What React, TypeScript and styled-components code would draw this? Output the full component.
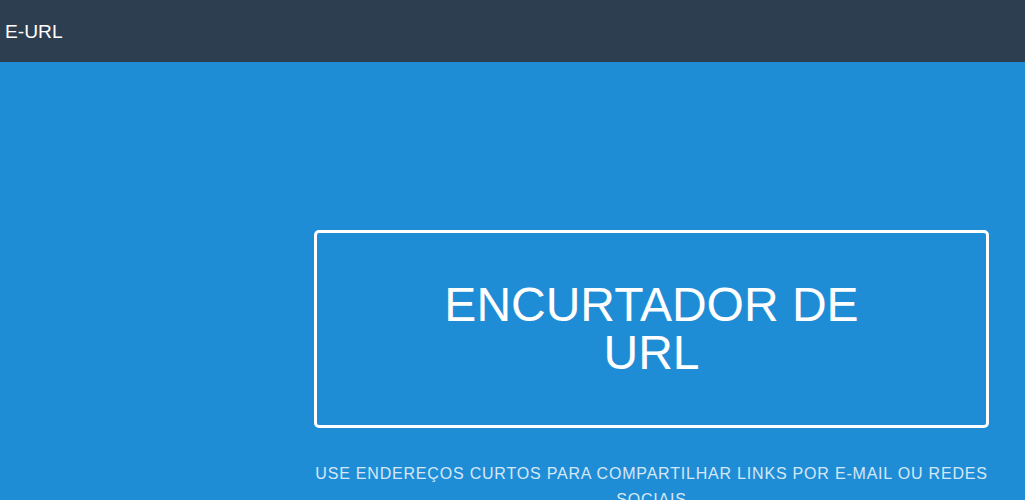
import React from "react";
import styled, { createGlobalStyle } from "styled-components";

const Global = createGlobalStyle`
  html, body { margin: 0; padding: 0; }
  body {
    font-family: "Liberation Sans", Arial, sans-serif;
    background: #1f8dd6;
    overflow: hidden;
  }
`;

const Page = styled.div`
  min-height: 500px;
  display: flex;
  flex-direction: column;
`;

const Header = styled.header`
  height: 62px;
  background: #2d3e50;
  display: flex;
  align-items: center;
  padding: 0 5px;
  box-sizing: border-box;
`;

const Brand = styled.a`
  color: #ffffff;
  font-size: 19.2px;
  font-weight: 400;
  text-decoration: none;
  margin-top: 1px;
`;

const Splash = styled.main`
  flex: 1;
  background: #1f8dd6;
  padding: 168px 0 0 314px;
`;

const SplashInner = styled.div`
  width: 675px;
  text-align: center;
  text-transform: uppercase;
`;

const Head = styled.h1`
  margin: 0;
  border: 3px solid #ffffff;
  border-radius: 5px;
  padding: 48px 76.8px;
  font-size: 48px;
  line-height: 48px;
  font-weight: 400;
  color: #ffffff;
`;

const Subhead = styled.p`
  margin: 33px -1px 0;
  color: #ffffff;
  opacity: 0.8;
  font-size: 16px;
  line-height: 26px;
  letter-spacing: 0.05em;
`;

export default function App() {
  return (
    <>
      <Global />
      <Page>
        <Header>
          <Brand href="#">E-URL</Brand>
        </Header>
        <Splash>
          <SplashInner>
            <Head>Encurtador de URL</Head>
            <Subhead>
              Use endereços curtos para compartilhar links por e-mail ou redes sociais
            </Subhead>
          </SplashInner>
        </Splash>
      </Page>
    </>
  );
}
